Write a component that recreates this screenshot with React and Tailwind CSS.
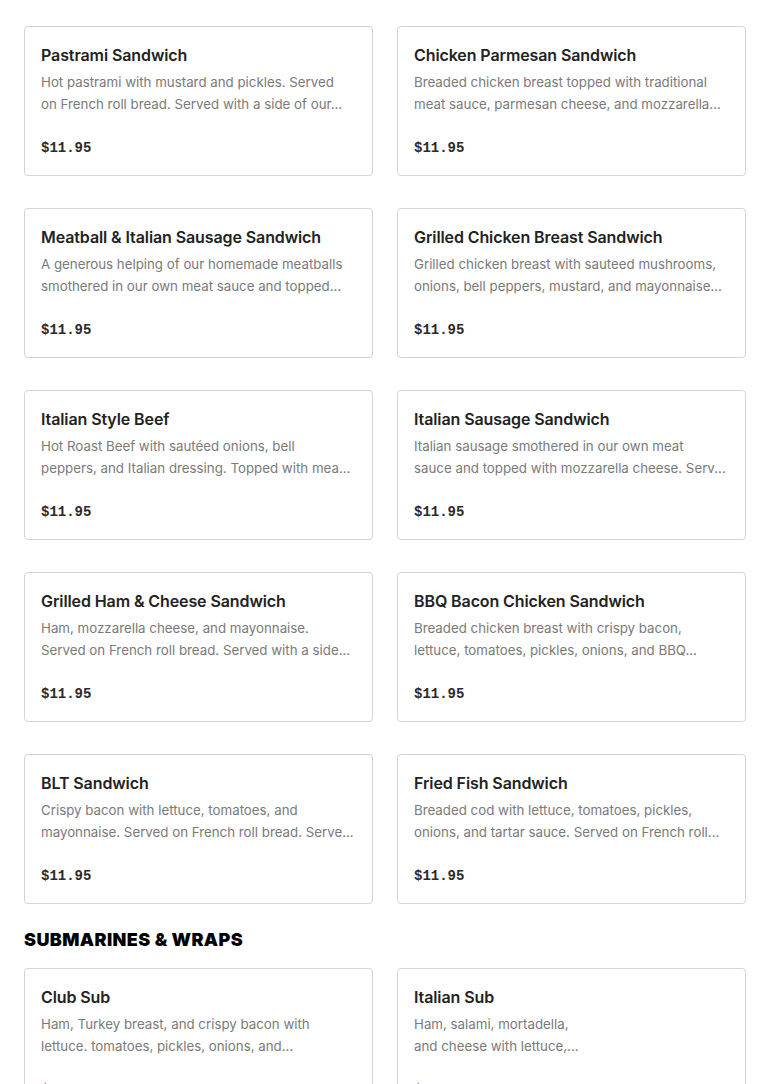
import React from "react";

const sandwiches = [
  ["Pastrami Sandwich", "Hot pastrami with mustard and pickles. Served", "on French roll bread. Served with a side of our..."],
  ["Chicken Parmesan Sandwich", "Breaded chicken breast topped with traditional", "meat sauce, parmesan cheese, and mozzarella..."],
  ["Meatball & Italian Sausage Sandwich", "A generous helping of our homemade meatballs", "smothered in our own meat sauce and topped..."],
  ["Grilled Chicken Breast Sandwich", "Grilled chicken breast with sauteed mushrooms,", "onions, bell peppers, mustard, and mayonnaise..."],
  ["Italian Style Beef", "Hot Roast Beef with sautéed onions, bell", "peppers, and Italian dressing. Topped with mea..."],
  ["Italian Sausage Sandwich", "Italian sausage smothered in our own meat", "sauce and topped with mozzarella cheese. Serv..."],
  ["Grilled Ham & Cheese Sandwich", "Ham, mozzarella cheese, and mayonnaise.", "Served on French roll bread. Served with a side..."],
  ["BBQ Bacon Chicken Sandwich", "Breaded chicken breast with crispy bacon,", "lettuce, tomatoes, pickles, onions, and BBQ..."],
  ["BLT Sandwich", "Crispy bacon with lettuce, tomatoes, and", "mayonnaise. Served on French roll bread. Serve..."],
  ["Fried Fish Sandwich", "Breaded cod with lettuce, tomatoes, pickles,", "onions, and tartar sauce. Served on French roll..."],
];

const subs = [
  ["Club Sub", "Ham, Turkey breast, and crispy bacon with", "lettuce. tomatoes, pickles, onions, and..."],
  ["Italian Sub", "Ham, salami, mortadella,", "and cheese with lettuce,..."],
];

function Card({ title, l1, l2 }) {
  return (
    <div className="h-[150px] border border-[#d4d4d4] rounded-[4px] bg-white px-4 pt-4 pb-4 flex flex-col">
      <div className="text-[16px] leading-6 font-semibold text-[#222222] tracking-[-0.1px]">
        {title}
      </div>
      <div className="mt-1 text-[13.3px] leading-[22px] text-[#7a7a7a]">
        <div className="whitespace-nowrap">{l1}</div>
        <div className="whitespace-nowrap">{l2}</div>
      </div>
      <div className="mt-auto text-[14px] leading-[22px] font-bold text-[#2a2a2a] font-['Liberation_Mono',monospace]">
        $11.95
      </div>
    </div>
  );
}

export default function App() {
  return (
    <div className="bg-white min-h-screen px-6 pt-[26px] font-['Inter',sans-serif]">
      <div className="grid grid-cols-2 gap-x-6 gap-y-8">
        {sandwiches.map(([t, a, b]) => (
          <Card key={t} title={t} l1={a} l2={b} />
        ))}
      </div>
      <h2 className="mt-6 mb-4 text-[18px] leading-6 font-black uppercase text-black tracking-[0.4px]">
        Submarines &amp; Wraps
      </h2>
      <div className="grid grid-cols-2 gap-x-6 gap-y-8">
        {subs.map(([t, a, b]) => (
          <Card key={t} title={t} l1={a} l2={b} />
        ))}
      </div>
    </div>
  );
}
